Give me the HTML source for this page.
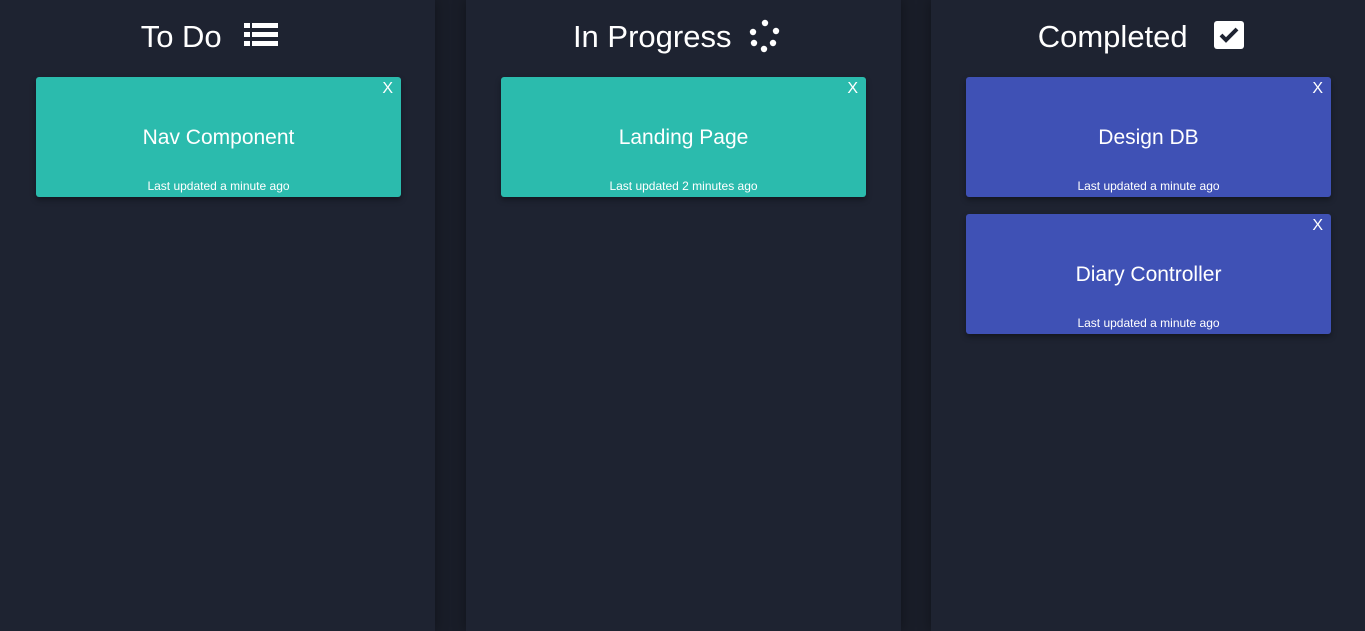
<!DOCTYPE html>
<html><head><style>
body{margin:0;width:1365px;height:631px;background:#191d28;font-family:"Liberation Sans",sans-serif;overflow:hidden;position:relative}
.col{position:absolute;top:0;height:631px;width:435px;background:#1e2331;box-shadow:0 0 12px rgba(0,0,0,.35)}
.h{position:absolute;top:18px;left:0;width:100%;text-align:center;color:#fff;font-size:31px;font-weight:300;line-height:38px}
.card{position:absolute;left:36px;width:365px;height:120px;border-radius:3px;color:#fff;text-align:center;box-shadow:0 3px 6px rgba(0,0,0,.35)}
.t{position:absolute;top:49px;width:100%;font-size:21px}
.s{position:absolute;top:102px;width:100%;font-size:12px}
.x{position:absolute;right:8px;top:3px;font-size:16px}
.g{background:#2bbbad}.b{background:#3f51b5}
svg{vertical-align:middle}
</style></head><body>
<div class="col" style="left:0"><div class="h" style="left:-8px">To Do <svg width="34" height="26" style="margin-left:14px;margin-top:-8px" viewBox="0 0 34 26"><g fill="#fff"><rect x="0" y="1" width="6" height="5"/><rect x="8" y="1" width="26" height="5"/><rect x="0" y="10" width="6" height="5"/><rect x="8" y="10" width="26" height="5"/><rect x="0" y="19" width="6" height="5"/><rect x="8" y="19" width="26" height="5"/></g></svg></div>
<div class="card g" style="top:77px"><div class="x">X</div><div class="t">Nav Component</div><div class="s">Last updated a minute ago</div></div></div>
<div class="col" style="left:466px"><div class="h" style="left:-6px">In Progress <svg width="34" height="34" style="margin-left:8px;margin-top:-6px" viewBox="0 0 34 34"><g fill="#fff"><circle cx="17" cy="4" r="3.2"/><circle cx="28" cy="12" r="3.2"/><circle cx="25" cy="24" r="3.2"/><circle cx="16" cy="30" r="3.2"/><circle cx="6" cy="24" r="3.2"/><circle cx="5" cy="13" r="3.2"/></g></svg></div>
<div class="card g" style="top:77px;left:35px"><div class="x">X</div><div class="t">Landing Page</div><div class="s">Last updated 2 minutes ago</div></div></div>
<div class="col" style="left:931px;width:434px"><div class="h" style="left:-7px">Completed <svg width="30" height="30" style="margin-left:18px;margin-top:-6px" viewBox="0 0 30 30"><rect width="30" height="28" rx="3" fill="#fff"/><path d="M7 14l5 5 11-11" stroke="#1e2331" stroke-width="4" fill="none"/></svg></div>
<div class="card b" style="top:77px;left:35px"><div class="x">X</div><div class="t">Design DB</div><div class="s">Last updated a minute ago</div></div>
<div class="card b" style="top:214px;left:35px"><div class="x">X</div><div class="t">Diary Controller</div><div class="s">Last updated a minute ago</div></div></div>
</body></html>
